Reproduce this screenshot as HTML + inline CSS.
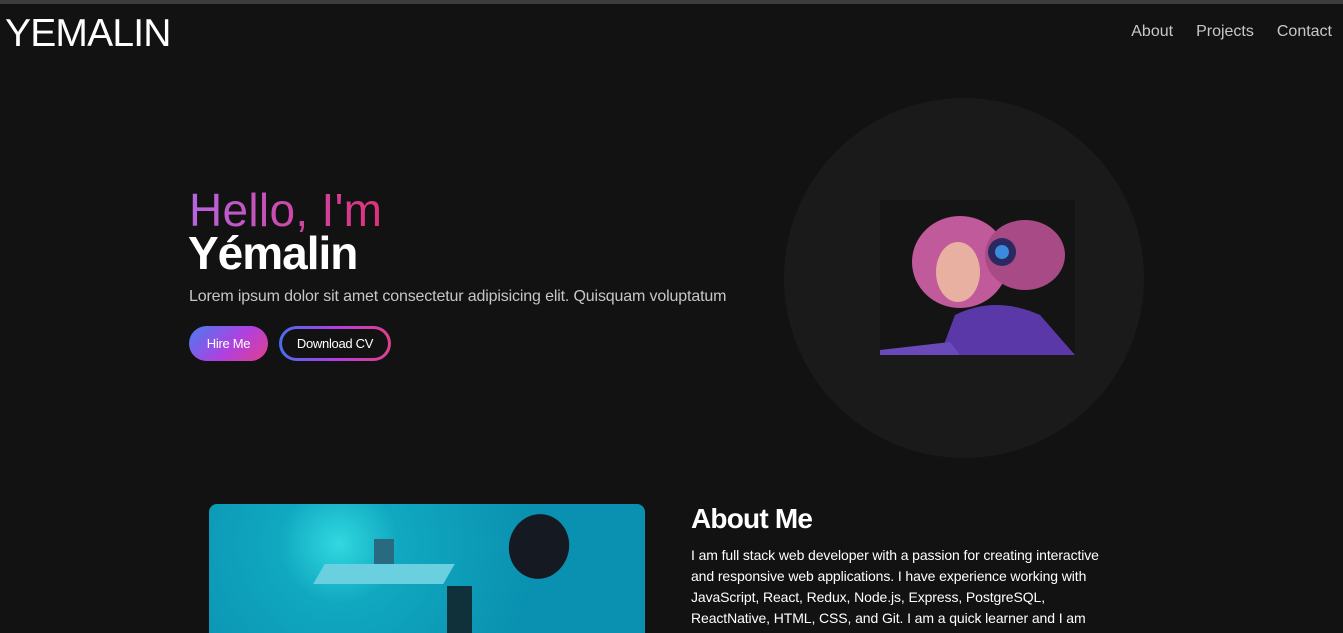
<!DOCTYPE html>
<html><head><meta charset="utf-8"><style>
*{margin:0;padding:0;box-sizing:border-box}
html,body{width:1343px;height:633px;overflow:hidden}
body{background:#121212;font-family:"Liberation Sans",Arial,sans-serif;color:#fff;position:relative}
.top{position:absolute;left:0;top:0;width:1343px;height:4px;background:#3d3d3d}
.logo{position:absolute;left:5px;top:12px;font-size:39px;letter-spacing:-0.8px}
.nav{position:absolute;top:23px;right:11px;font-size:16px;color:#c8c8c8}
.nav span{margin-left:23px}
.hello{position:absolute;left:189px;top:184px;font-size:46px;line-height:52px;background:linear-gradient(90deg,#b565e0,#e0307a);-webkit-background-clip:text;color:transparent;letter-spacing:0.3px}
.name{position:absolute;left:188px;top:227px;font-size:46px;font-weight:bold;line-height:52px;letter-spacing:-1px}
.lorem{position:absolute;left:189px;top:288px;font-size:16px;color:#c6c6c6;letter-spacing:-0.15px}
.b1{position:absolute;left:189px;top:326px;width:79px;height:35px;border-radius:18px;background:linear-gradient(135deg,#4a7cf0,#b040e0 55%,#e0408a);font-size:13px;text-align:center;line-height:35px;letter-spacing:-0.3px}
.b2{position:absolute;left:279px;top:326px;width:112px;height:35px;border-radius:18px;padding:3px;background:linear-gradient(90deg,#4a6cf0,#b040e0,#e0408a)}
.b2 div{background:#121212;border-radius:15px;height:29px;line-height:29px;text-align:center;font-size:13px;letter-spacing:-0.3px}
.circle{position:absolute;left:784px;top:98px;width:360px;height:360px;border-radius:50%;background:#1a1a1a}
.img{position:absolute;left:880px;top:200px;width:195px;height:155px;background:#141414;overflow:hidden}
.photo{position:absolute;left:209px;top:504px;width:436px;height:129px;border-radius:8px 8px 0 0;background:radial-gradient(circle at 130px 40px,#30d8e0 0,#10a8c0 60px,#0a90b0 200px),#0a8cab;overflow:hidden}
.ah{position:absolute;left:691px;top:503px;font-size:28px;font-weight:bold;letter-spacing:-0.8px}
.ap{position:absolute;left:691px;top:545px;width:430px;font-size:14px;line-height:21px;letter-spacing:-0.1px}
</style></head><body>
<div class="top"></div>
<div class="logo">YEMALIN</div>
<div class="nav"><span>About</span><span>Projects</span><span>Contact</span></div>
<div class="hello">Hello, I'm</div>
<div class="name">Yémalin</div>
<div class="lorem">Lorem ipsum dolor sit amet consectetur adipisicing elit. Quisquam voluptatum</div>
<div class="b1">Hire Me</div>
<div class="b2"><div>Download CV</div></div>
<div class="circle"></div>
<div class="img">
<svg width="195" height="155" viewBox="0 0 195 155">
<ellipse cx="80" cy="62" rx="48" ry="46" fill="#c05a9a"/>
<ellipse cx="145" cy="55" rx="40" ry="35" fill="#a84a86"/>
<ellipse cx="78" cy="72" rx="22" ry="30" fill="#e8b0a0"/>
<circle cx="122" cy="52" r="14" fill="#2a2a60"/>
<circle cx="122" cy="52" r="7" fill="#3a8ae0"/>
<path d="M60 155 L75 115 Q115 95 160 115 L195 155 Z" fill="#5a38a8"/>
<path d="M0 150 L70 142 L80 155 L0 155 Z" fill="#6a4ab8"/>
</svg></div>
<div class="photo">
<div style="position:absolute;left:300px;top:10px;width:60px;height:65px;border-radius:50%;background:#151a22;transform:rotate(15deg)"></div>
<div style="position:absolute;left:110px;top:60px;width:130px;height:20px;background:#6ad0e0;transform:skewX(-30deg)"></div>
<div style="position:absolute;left:165px;top:35px;width:20px;height:25px;background:#2a6a80"></div>
<div style="position:absolute;left:238px;top:82px;width:25px;height:60px;background:#10303a"></div>
</div>
<div class="ah">About Me</div>
<div class="ap">I am full stack web developer with a passion for creating interactive and responsive web applications. I have experience working with JavaScript, React, Redux, Node.js, Express, PostgreSQL, ReactNative, HTML, CSS, and Git. I am a quick learner and I am always looking to expand my knowledge and skill set.</div>
</body></html>
